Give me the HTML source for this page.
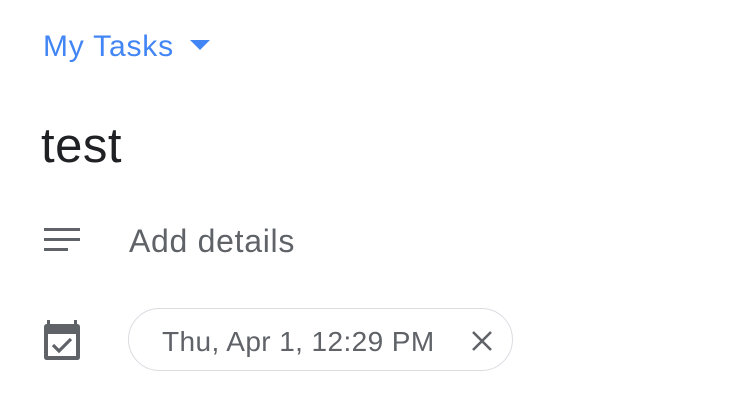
<!DOCTYPE html>
<html><head><style>
body{margin:0;width:750px;height:402px;background:#fff;position:relative;overflow:hidden;font-family:"Liberation Sans",sans-serif}
.a{position:absolute;white-space:nowrap;line-height:1}
</style></head><body>
<div class="a" style="left:43px;top:32px;font-size:30px;color:#4285f4;letter-spacing:0.8px">My Tasks</div>
<svg class="a" style="left:190px;top:40px" width="22" height="12"><path d="M0 0H20L10 10Z" fill="#4285f4"/></svg>
<div class="a" style="left:41px;top:122px;font-size:49px;color:#202124;letter-spacing:0.5px">test</div>
<svg class="a" style="left:44px;top:228px" width="37" height="25"><g fill="#5f6368"><rect x="0" y="0" width="36" height="3"/><rect x="0" y="10" width="36" height="3"/><rect x="0" y="20" width="24" height="3"/></g></svg>
<div class="a" style="left:129px;top:225px;font-size:32px;color:#5f6368;letter-spacing:0.7px">Add details</div>
<svg class="a" style="left:44px;top:320px" width="36" height="41"><g fill="#5f6368"><rect x="3" y="0" width="3" height="6"/><rect x="30" y="0" width="3" height="6"/><path d="M3 4H33Q36 4 36 7V37Q36 40 33 40H3Q0 40 0 37V7Q0 4 3 4ZM4 14V36H32V14Z" fill-rule="evenodd"/><path d="M9 25l6 6 12-12" stroke="#5f6368" stroke-width="3.2" fill="none"/></g></svg>
<div class="a" style="left:128px;top:308px;width:383px;height:61px;border:1.5px solid #dadce0;border-radius:32px"></div>
<div class="a" style="left:162px;top:328px;font-size:28px;color:#5f6368;letter-spacing:0.4px">Thu, Apr 1, 12:29 PM</div>
<svg class="a" style="left:471px;top:330px" width="22" height="22"><path d="M2 2L20 20M20 2L2 20" stroke="#5f6368" stroke-width="2.6"/></svg>
</body></html>
